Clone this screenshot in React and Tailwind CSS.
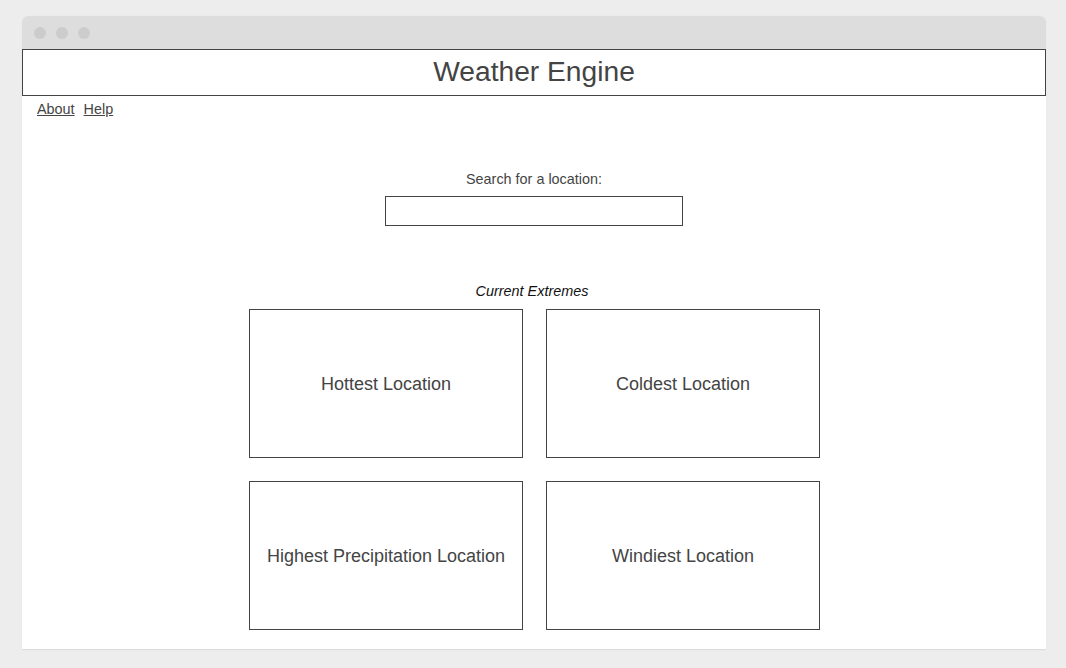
export default function App() {
    const cards = [
        "Hottest Location",
        "Coldest Location",
        "Highest Precipitation Location",
        "Windiest Location",
    ];

    return (
        <div className="min-h-[668px] bg-[#ededed] pt-4 font-['Liberation_Sans',Arial,sans-serif]">
            <div className="mx-[22px] w-[1024px] h-[634px] bg-white rounded-t-[6px] border-b border-[#dcdcdc] shadow-[0_0_1px_rgba(0,0,0,0.08)] flex flex-col">
                {/* title bar */}
                <div className="h-[33px] bg-[#dddddd] rounded-t-[6px] flex items-center gap-[10px] pl-3">
                    <span className="w-3 h-3 rounded-full bg-[#cccccc]" />
                    <span className="w-3 h-3 rounded-full bg-[#cccccc]" />
                    <span className="w-3 h-3 rounded-full bg-[#cccccc]" />
                </div>

                {/* header */}
                <div className="h-[47px] border border-[#444] flex items-center justify-center pb-[2px]">
                    <h1 className="text-[28.2px] leading-none text-[#444]">Weather Engine</h1>
                </div>

                <nav className="flex gap-[9px] pl-[15px] pt-[5px] text-[14.4px] leading-4 text-[#444]">
                    <a href="#" className="underline">About</a>
                    <a href="#" className="underline">Help</a>
                </nav>

                <div className="flex flex-col items-center mt-[54px]">
                    <label className="text-[14.4px] leading-4 text-[#444]">Search for a location:</label>
                    <input
                        type="text"
                        className="mt-[9px] w-[298px] h-[30px] border border-[#444] outline-none px-2"
                    />
                </div>

                <div className="flex flex-col items-center mt-[57px]">
                    <p className="text-[14.4px] leading-4 italic text-[#111] pr-[4px]">Current Extremes</p>
                    <div className="grid grid-cols-[274px_274px] gap-[23px] mt-[10px] ml-[1px]">
                        {cards.map((c) => (
                            <div
                                key={c}
                                className="h-[149px] border border-[#444] flex items-center justify-center pt-[2px] text-[18px] text-[#444]"
                            >
                                {c}
                            </div>
                        ))}
                    </div>
                </div>
            </div>
        </div>
    );
}
